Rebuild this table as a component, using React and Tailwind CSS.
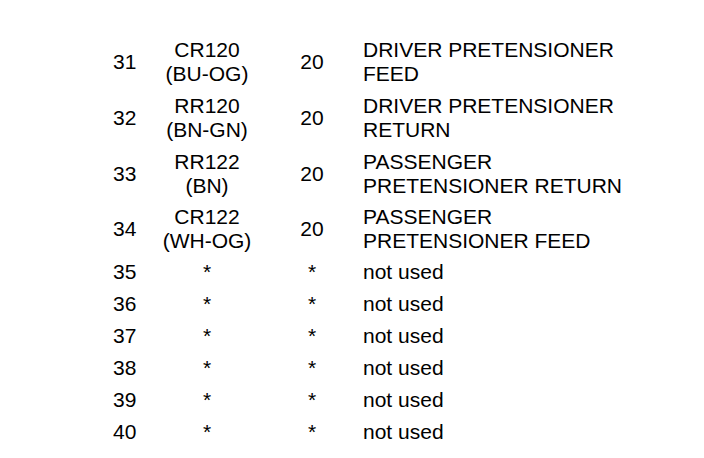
export default function App() {
  const rows = [
    { n: "31", a: ["CR120", "(BU-OG)"], g: "20", d: ["DRIVER PRETENSIONER", "FEED"], h: "h-[56px]" },
    { n: "32", a: ["RR120", "(BN-GN)"], g: "20", d: ["DRIVER PRETENSIONER", "RETURN"], h: "h-[56px]" },
    { n: "33", a: ["RR122", "(BN)"], g: "20", d: ["PASSENGER", "PRETENSIONER RETURN"], h: "h-[56px]" },
    { n: "34", a: ["CR122", "(WH-OG)"], g: "20", d: ["PASSENGER", "PRETENSIONER FEED"], h: "h-[54px]" },
    { n: "35", a: ["*"], g: "*", d: ["not used"], h: "h-[32px]" },
    { n: "36", a: ["*"], g: "*", d: ["not used"], h: "h-[32px]" },
    { n: "37", a: ["*"], g: "*", d: ["not used"], h: "h-[32px]" },
    { n: "38", a: ["*"], g: "*", d: ["not used"], h: "h-[32px]" },
    { n: "39", a: ["*"], g: "*", d: ["not used"], h: "h-[32px]" },
    { n: "40", a: ["*"], g: "*", d: ["not used"], h: "h-[32px]" },
  ];
  return (
    <div className="w-[704px] h-[458px] bg-white text-black pl-[113px] pt-[34px] text-[21px] leading-[24px] font-['Liberation_Sans',Arial,sans-serif] overflow-hidden">
      {rows.map((r) => (
        <div key={r.n} className={`grid grid-cols-[40px_108px_102px_1fr] items-center ${r.h}`}>
          <div>{r.n}</div>
          <div className="text-center">
            {r.a.map((t) => (
              <div key={t}>{t}</div>
            ))}
          </div>
          <div className="text-center">{r.g}</div>
          <div>
            {r.d.map((t) => (
              <div key={t}>{t}</div>
            ))}
          </div>
        </div>
      ))}
    </div>
  );
}
